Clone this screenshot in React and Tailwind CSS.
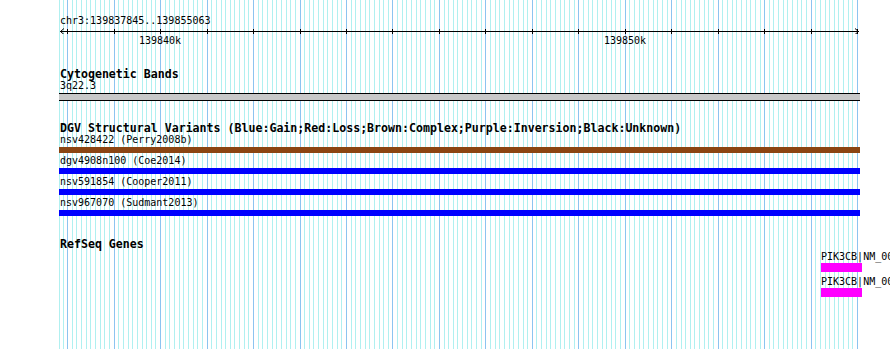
const START = 139837845
const END = 139855063
const LEFT = 60
const WIDTH = 800

const toX = bp => LEFT + ((bp - START) * WIDTH) / (END - START)

// grid: one line every 100 bp, darker every 1 kb
function gridLines() {
  const lines = [{ x: 59, major: false }]
  for (let bp = 139837900; bp <= END; bp += 100) {
    lines.push({ x: Math.round(toX(bp)), major: bp % 1000 === 0 })
  }
  return lines
}

const ticks = []
for (let bp = 139838000; bp <= END; bp += 1000) ticks.push(Math.round(toX(bp)))

const labels = [
  { text: '139840k', x: Math.round(toX(139840000)) },
  { text: '139850k', x: Math.round(toX(139850000)) },
]

const variants = [
  { label: 'nsv428422 (Perry2008b)', color: 'bg-[#8b4513]' },
  { label: 'dgv4908n100 (Coe2014)', color: 'bg-[#0000ff]' },
  { label: 'nsv591854 (Cooper2011)', color: 'bg-[#0000ff]' },
  { label: 'nsv967070 (Sudmant2013)', color: 'bg-[#0000ff]' },
]

function Grid() {
  return (
    <svg className="absolute inset-0" width="890" height="349" shapeRendering="crispEdges">
      {gridLines().map((l, i) => (
        <line key={i} x1={l.x + 0.5} x2={l.x + 0.5} y1="0" y2="349"
          stroke={l.major ? '#8cc4f0' : '#b0f0f0'} strokeWidth="1" />
      ))}
    </svg>
  )
}

function Ruler() {
  return (
    <div>
      <div className="pt-[14px] pl-[60px] text-[10px] leading-[13px]">chr3:139837845..139855063</div>
      <svg width="890" height="7" className="block" shapeRendering="crispEdges">
        <line x1="60" x2="859" y1="4.5" y2="4.5" stroke="#000" />
        {ticks.map(x => (
          <line key={x} x1={x + 0.5} x2={x + 0.5} y1="2" y2="7" stroke="#000" />
        ))}
        <polyline points="64,1.5 60.5,4.5 64,7.5" fill="none" stroke="#000" shapeRendering="auto" />
        <polyline points="855,1.5 858.5,4.5 855,7.5" fill="none" stroke="#000" shapeRendering="auto" />
      </svg>
      <div className="relative h-[13px] text-[10px] leading-[13px]">
        {labels.map(l => (
          <span key={l.text} className="absolute top-0 w-[60px] text-center" style={{ left: l.x - 30 }}>
            {l.text}
          </span>
        ))}
      </div>
    </div>
  )
}

function Title({ children }) {
  return <div className="font-bold text-[11.6px] leading-[12px] whitespace-nowrap">{children}</div>
}

function Label({ children, className = '' }) {
  return <div className={`text-[10px] leading-[11px] whitespace-nowrap ${className}`}>{children}</div>
}

export default function App() {
  return (
    <div className="relative w-[890px] h-[349px] overflow-hidden bg-white text-black font-['DejaVu_Sans_Mono',monospace]">
      <Grid />
      <div className="relative">
        <Ruler />

        {/* Cytogenetic bands */}
        <section className="mt-[21px] pl-[60px]">
          <Title>Cytogenetic Bands</Title>
          <Label>3q22.3</Label>
          <div className="mt-[2px] -ml-px w-[801px] h-[8px] border-y border-black bg-[#c8c8c8]" />
        </section>

        {/* DGV */}
        <section className="mt-[21px] pl-[60px]">
          <Title>DGV Structural Variants (Blue:Gain;Red:Loss;Brown:Complex;Purple:Inversion;Black:Unknown)</Title>
          {variants.map((v, i) => (
            <div key={v.label} className={i > 0 ? 'mt-[2px]' : ''}>
              <Label>{v.label}</Label>
              <div className={`mt-[2px] -ml-px w-[801px] h-[6px] ${v.color}`} />
            </div>
          ))}
        </section>

        {/* RefSeq */}
        <section className="mt-[22px] pl-[60px]">
          <Title>RefSeq Genes</Title>
          <div className="ml-[761px]">
            <Label className="mt-[1px]">PIK3CB|NM_006219</Label>
            <div className="mt-[1px] w-[41px] h-[9px] bg-[#ff00ff]" />
            <Label className="mt-[4px]">PIK3CB|NM_001256045</Label>
            <div className="mt-[1px] w-[41px] h-[9px] bg-[#ff00ff]" />
          </div>
        </section>
      </div>
    </div>
  )
}
